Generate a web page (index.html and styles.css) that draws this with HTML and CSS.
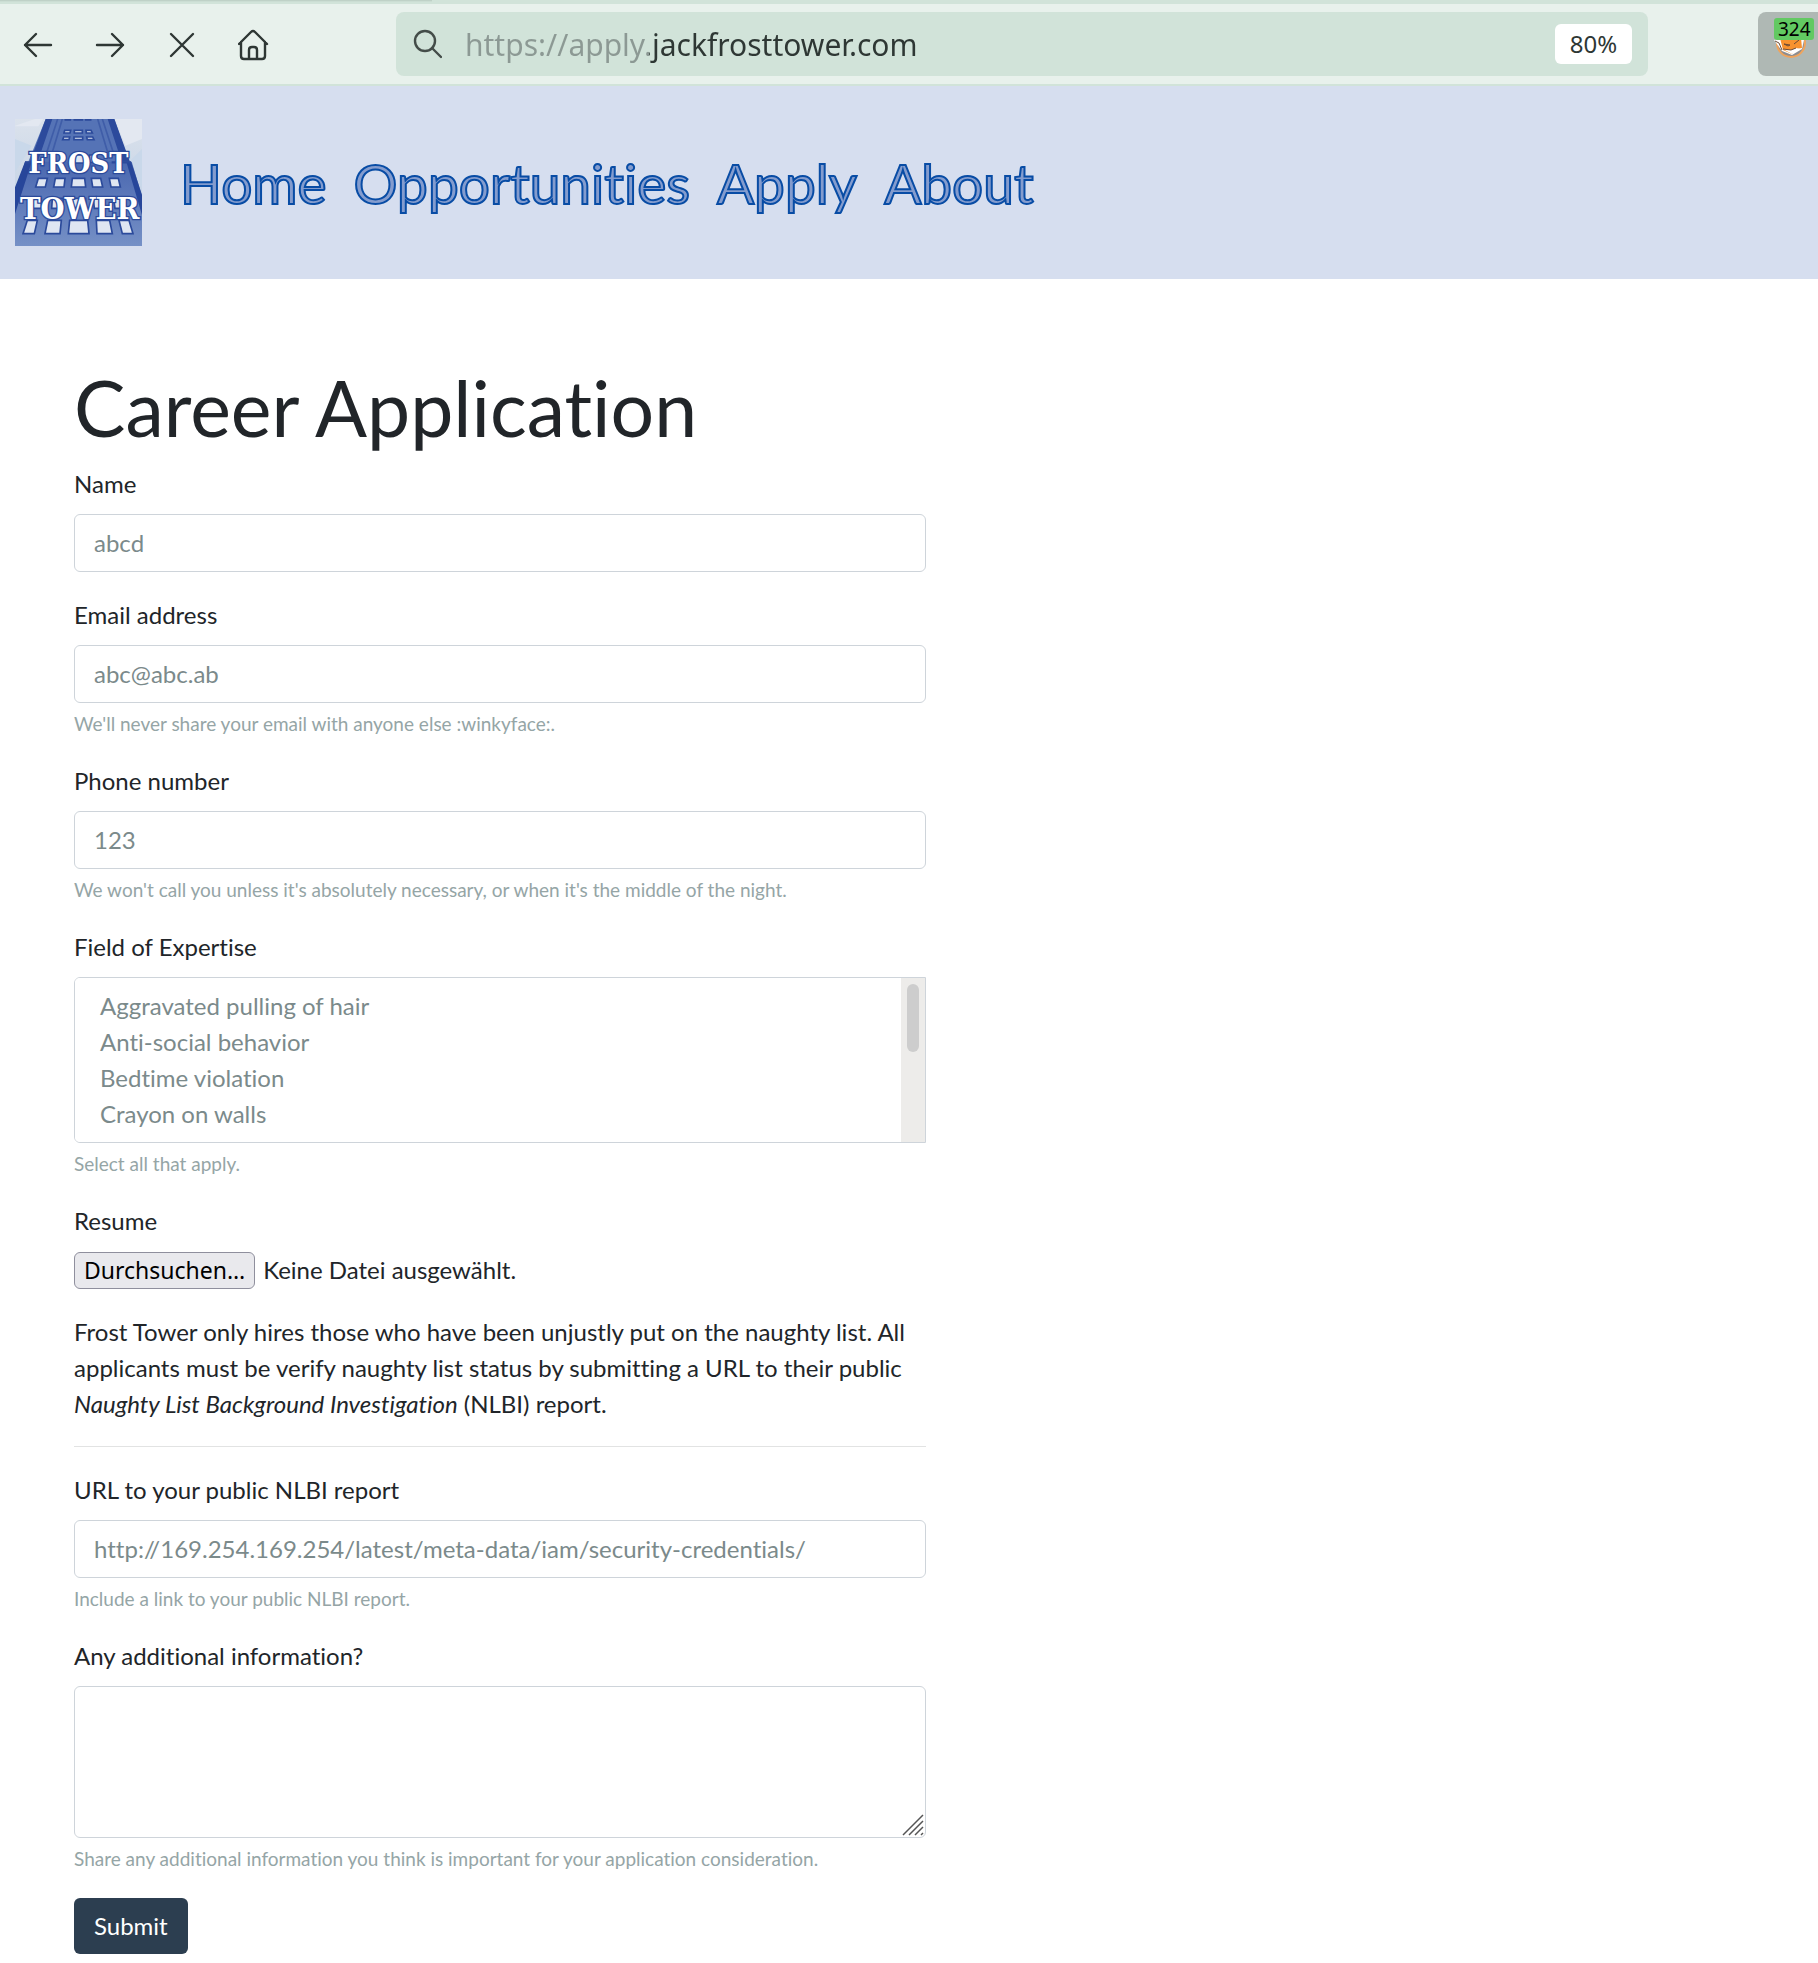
FILE: index.html
```html
<!DOCTYPE html>
<html lang="en">
<head>
<meta charset="utf-8">
<meta name="viewport" content="width=device-width, initial-scale=1">
<title>Frost Tower - Career Application</title>
<link rel="stylesheet" href="styles.css">
</head>
<body>
<div class="tab-strip"><div class="tab-shadow"></div></div>
<div class="toolbar">
  <div class="nav-buttons">
    <button class="tool" type="button" aria-label="Back"><svg width="30" height="30" viewBox="0 0 30 30"><path d="M28 15H2M13 4L2 15l11 11"/></svg></button>
    <button class="tool" type="button" aria-label="Forward"><svg width="30" height="30" viewBox="0 0 30 30"><path d="M2 15h26M17 4l11 11-11 11"/></svg></button>
    <button class="tool" type="button" aria-label="Stop"><svg width="30" height="30" viewBox="0 0 30 30"><path d="M4 4l22 22M26 4L4 26"/></svg></button>
    <button class="tool" type="button" aria-label="Home"><svg width="32" height="32" viewBox="0 0 32 32"><path d="M1 15L13 3q2-2 4 0l12 12M3 13v14q0 3 3 3h18q3 0 3-3V13M11 30V21q0-3 3-3h2q3 0 3 3v9"/></svg></button>
  </div>
  <div class="url-bar">
    <svg class="search" width="30" height="30" viewBox="0 0 30 30"><circle cx="13" cy="12" r="10"/><path d="M20 19l9 9"/></svg>
    <input class="url" type="text" aria-label="Address" value="https://apply.jackfrosttower.com">
    <button class="zoom" type="button">80%</button>
  </div>
  <button class="extension" type="button" aria-label="Extension">
    <svg width="32" height="32" viewBox="0 0 32 32">
      <circle cx="17" cy="15" r="14" fill="#8d8d90" stroke="#f0a45c" stroke-width="2"/>
      <path d="M0 12l7-2h19l4 2-2 9-10 6-10-4z" fill="#fff"/>
      <path d="M6 10h21l1 10-6 1-4 5-9-4z" fill="#f7922f"/>
      <path d="M9 21l8 1 5-2 4 1-8 5z" fill="#fff"/>
      <path d="M1 13l4 2 3 7M10 16l4 2 2-1zM20 16l5-4M9 21l8 1 5-2" fill="none" stroke="#6b4a35" stroke-width="1"/>
    </svg>
    <span class="badge">324</span>
  </button>
</div>
<header class="site-header">
  <a class="logo" href="#" aria-label="Frost Tower">
    <svg width="127" height="127" viewBox="0 0 381 381">
      <defs>
        <linearGradient id="sky" x1="0" y1="0" x2="0" y2="1"><stop offset="0" stop-color="#dbe2ec"/><stop offset="1" stop-color="#b9cbe2"/></linearGradient>
        <linearGradient id="wall" x1="0" y1="0" x2="0" y2="1"><stop offset="0" stop-color="#4a67b0"/><stop offset="1" stop-color="#7590c6"/></linearGradient>
      </defs>
      <rect width="381" height="381" fill="url(#sky)"/>
      <path d="M0 20L60 0H85L70 22H0zM300 0h81v60l-50 20z" fill="#e3e8f1"/>
      <path d="M0 60l50 20-50 80zM381 90l-40 40 40 80z" fill="#c9d8ea"/>
      <path d="M92 0H298L342 128V180H40V128z" fill="#5573b6"/>
      <path d="M92 0h20L68 128H45zM278 0h20l47 128h-25z" fill="#2c4a9c"/>
      <path d="M128 0L92 110M142 0L112 100M262 0l36 110M248 0l30 100" fill="none" stroke="#3f5da8" stroke-width="5"/>
      <path d="M30 128H350L381 230V381H0V230z" fill="url(#wall)"/>
      <path d="M30 128h20L0 285V205zM334 128h14l33 100v60z" fill="#27469a"/>
      <path d="M30 130H90M290 130h58" stroke="#2c4a9c" stroke-width="7"/>
      <g fill="#dfe6f2" stroke="#2b4a9b" stroke-width="5">
        <path d="M151 0h15v3h-15zM178 0h24v3h-24zM212 0h15v3h-15z"/>
        <path d="M149 34h18l-2 8h-18zM178 34h24v8h-24zM213 34h15l4 8h-18zM146 54h18l-2 8h-19zM177 54h26v8h-26zM215 54h18l4 8h-20z"/>
        <path d="M178 108h34v24h-34zM224 108h22v22h-22z"/>
        <path d="M70 178h27l-6 26H62zM121 178h29l-3 26h-31zM172 178h37l3 26h-43zM229 178h28l6 26h-30zM283 178h27l6 26h-28z"/>
        <path d="M54 238h25v30H50zM112 238h32v30h-34zM172 238h40v30h-40zM235 238h35v30h-32zM296 238h32l8 30h-36z"/>
        <path d="M37 304h30l-9 40H24zM98 304h41l-4 40H90zM164 304h54l4 40h-62zM244 304h40l8 40h-46zM312 304h30l12 40h-32z"/>
      </g>
      <g class="logo-text">
        <text x="190" y="163" font-size="86">FROST</text>
        <text x="194" y="300" font-size="92">TOWER</text>
      </g>
    </svg>
  </a>
  <nav class="site-nav">
    <a href="#">Home</a>
    <a href="#">Opportunities</a>
    <a href="#">Apply</a>
    <a href="#">About</a>
  </nav>
</header>
<main class="content">
  <form class="application">
    <h1>Career Application</h1>
    <div class="group">
      <label for="name">Name</label>
      <input class="control" id="name" type="text" value="abcd">
    </div>
    <div class="group">
      <label for="email">Email address</label>
      <input class="control" id="email" type="email" value="abc@abc.ab">
      <small>We'll never share your email with anyone else :winkyface:.</small>
    </div>
    <div class="group">
      <label for="phone">Phone number</label>
      <input class="control" id="phone" type="text" value="123">
      <small>We won't call you unless it's absolutely necessary, or when it's the middle of the night.</small>
    </div>
    <div class="group">
      <label for="field">Field of Expertise</label>
      <div class="listbox">
        <select class="control list" id="field" multiple size="4">
          <option>Aggravated pulling of hair</option>
          <option>Anti-social behavior</option>
          <option>Bedtime violation</option>
          <option>Crayon on walls</option>
        </select>
        <div class="scroll-track"><div class="scroll-thumb"></div></div>
      </div>
      <small>Select all that apply.</small>
    </div>
    <div class="group">
      <label for="resume">Resume</label>
      <div class="file">
        <button class="browse" type="button" tabindex="-1">Durchsuchen…</button>
        <span>Keine Datei ausgewählt.</span>
        <input class="file-input" id="resume" type="file">
      </div>
    </div>
    <p>Frost Tower only hires those who have been unjustly put on the naughty list. All applicants must be verify naughty list status by submitting a URL to their public <em>Naughty List Background Investigation</em> (NLBI) report.</p>
    <hr>
    <div class="group">
      <label for="report">URL to your public NLBI report</label>
      <input class="control" id="report" type="text" value="http://169.254.169.254/latest/meta-data/iam/security-credentials/">
      <small>Include a link to your public NLBI report.</small>
    </div>
    <div class="group">
      <label for="info">Any additional information?</label>
      <div class="area">
        <textarea class="control" id="info"></textarea>
        <svg class="grip" width="22" height="22" viewBox="0 0 22 22"><path d="M1 21L21 1M7 21L21 7M13 21l8-8M19 21l2-2"/></svg>
      </div>
      <small>Share any additional information you think is important for your application consideration.</small>
    </div>
    <button class="submit" type="submit">Submit</button>
  </form>
</main>
</body>
</html>
```
FILE: styles.css
```css
* { box-sizing: border-box; }
body {
  margin: 0;
  background: #fff;
  color: #212529;
  font: 24px/36px Lato, "Liberation Sans", sans-serif;
  font-variant-ligatures: none;
}
button, input, select, textarea {
  margin: 0;
  color: inherit;
  font: inherit;
  font-variant-ligatures: none;
}
button { border: 0; background: none; cursor: pointer; }
svg { display: block; }

/* Browser chrome */
.tab-strip { height: 4px; background: #d1e3d9; }
.tab-shadow { width: 432px; height: 2px; background: linear-gradient(#b9cbc1, #d1e3d9); }
.toolbar {
  display: flex;
  align-items: center;
  height: 82px;
  padding-left: 2px;
  background: #e8f1ec;
  border-bottom: 2px solid #d1e3d9;
  font-family: "Noto Sans", sans-serif;
  color: #2e3734;
}
.nav-buttons { display: flex; margin-right: 106px; }
.tool {
  display: flex;
  align-items: center;
  justify-content: center;
  width: 72px;
  height: 64px;
  padding: 2px 0 0;
}
.tool svg, .search { fill: none; stroke: #2e3734; stroke-width: 2.4; stroke-linecap: round; stroke-linejoin: round; }
.url-bar {
  display: flex;
  flex: 1;
  align-items: center;
  gap: 23px;
  min-width: 0;
  height: 64px;
  padding: 0 16px;
  background: #d1e3d9;
  border-radius: 8px;
}
.search { flex: none; stroke: #444d49; }
.url {
  flex: 1;
  min-width: 0;
  height: 48px;
  padding: 0;
  border: 0;
  outline: 0;
  font-size: 30px;
  color: transparent;
  background: linear-gradient(90deg, #8c9994 184px, #2e3734 184px);
  background-clip: text;
  -webkit-background-clip: text;
}
.zoom {
  width: 77px;
  height: 40px;
  padding: 0;
  border-radius: 6px;
  background: #fff;
  font-size: 24px;
}
.extension {
  position: relative;
  width: 60px;
  height: 64px;
  margin-left: 110px;
  padding: 0 0 0 16px;
  border-radius: 8px 0 0 8px;
  background: #afb8b4;
}
.badge {
  position: absolute;
  top: 6px;
  left: 16px;
  width: 40px;
  height: 22px;
  padding-left: 4px;
  border-radius: 3px;
  background: #62c962;
  color: #000;
  font-size: 19px;
  line-height: 22px;
  text-align: left;
}

/* Site header */
.site-header {
  display: flex;
  align-items: center;
  gap: 38px;
  padding: 33px 15px;
  background: #d6deef;
}
.logo { flex: none; }
.logo-text {
  fill: #fff;
  stroke: #2b4a9b;
  stroke-width: 8;
  paint-order: stroke;
  font-family: "DejaVu Serif Condensed", "DejaVu Serif", serif;
  font-weight: bold;
  text-anchor: middle;
}
.site-nav { display: flex; gap: 27px; font-size: 55px; line-height: 68px; }
.site-nav a {
  color: #849cce;
  text-decoration: none;
  -webkit-text-stroke: 2px #084ca5;
}

/* Application form */
.content { padding: 82px 40px 8px 74px; }
.application { width: 50%; }
h1 { margin: 0 0 13px; font-size: 77px; line-height: 92px; font-weight: 400; }
.group { margin-bottom: 25px; }
label { display: block; margin-bottom: 12px; }
.control {
  display: block;
  width: 100%;
  height: 58px;
  padding: 8px 19px 10px;
  border: 1px solid #ced4da;
  border-radius: 6px;
  background: #fff;
  color: #7b8a8b;
  outline: 0;
}
.listbox { position: relative; }
.list {
  height: 166px;
  padding-top: 13px;
  border-radius: 6px 0 0 6px;
}
.list option { min-height: 36px; padding: 0 6px; line-height: 36px; }
.scroll-track {
  position: absolute;
  top: 1px;
  right: 1px;
  bottom: 1px;
  width: 24px;
  padding: 6px;
  background: #edecea;
}
.scroll-thumb { height: 68px; border-radius: 6px; background: #cdcdcd; }
small { display: block; margin-top: 6px; font-size: 19px; line-height: 29px; color: #95a5a6; }
.file { position: relative; display: flex; align-items: center; gap: 8px; height: 38px; }
.browse {
  height: 37px;
  padding: 0 9px;
  border: 1px solid #8f8f9d;
  border-radius: 6px;
  background: #e9e9ed;
  color: #000;
  font-family: "Noto Sans", sans-serif;
  font-size: 23px;
  line-height: 34px;
}
.file-input { position: absolute; inset: 0; width: 100%; opacity: 0; }
p { margin: 0 0 24px; }
hr { margin: 0 0 25px; border: 0; border-top: 1px solid #e2e3e3; }
.area { position: relative; }
.area .control { height: 152px; resize: none; }
.grip { position: absolute; right: 2px; bottom: 2px; fill: none; stroke: #555; stroke-width: 1.5; }
.submit {
  display: block;
  height: 56px;
  padding: 0 20px;
  border-radius: 6px;
  background: #2c3e50;
  color: #fff;
}
```
